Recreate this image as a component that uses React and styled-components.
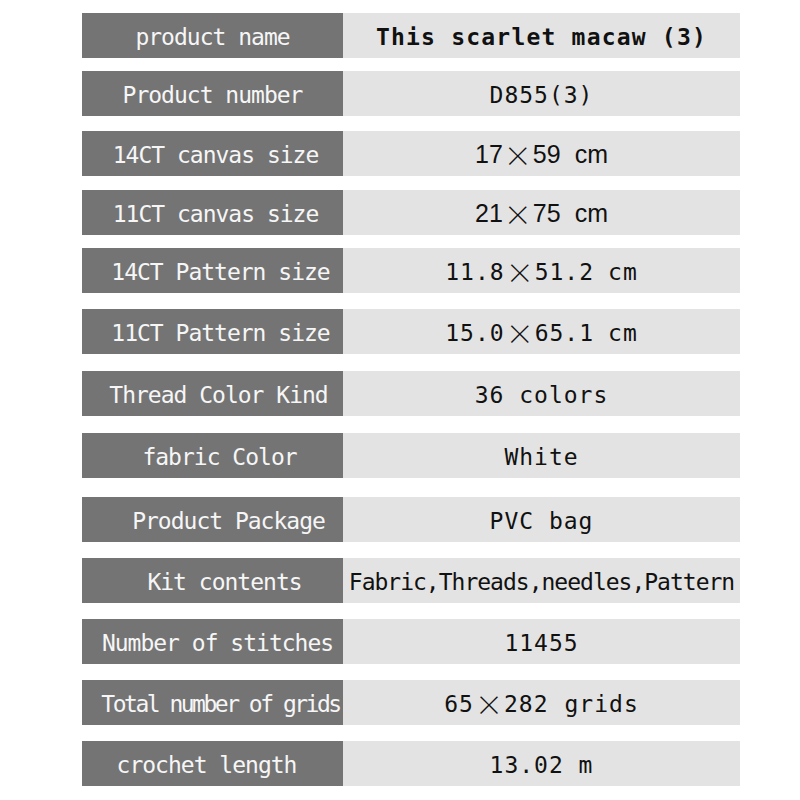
import React from "react";
import styled, { createGlobalStyle } from "styled-components";

const Global = createGlobalStyle`
  html, body { margin: 0; padding: 0; background: #ffffff; }
  body { width: 800px; height: 800px; overflow: hidden; }
`;

const Sheet = styled.div`
  display: flex;
  flex-direction: column;
  padding: 0 0 0 82px;
  width: 800px;
  box-sizing: border-box;
`;

const Row = styled.div`
  display: grid;
  grid-template-columns: 261px 397px;
  height: 45px;
  margin-top: ${(p) => p.$gap}px;
`;

const Label = styled.div`
  background: #747474;
  color: #f6f6f6;
  display: flex;
  align-items: center;
  justify-content: center;
  padding-left: ${(p) => (p.$shift > 0 ? p.$shift * 2 : 0)}px;
  padding-right: ${(p) => (p.$shift < 0 ? -p.$shift * 2 : 0)}px;
  font-family: "DejaVu Sans Mono", "Liberation Mono", monospace;
  font-size: 23px;
  letter-spacing: ${(p) => p.$ls ?? -1}px;
  white-space: nowrap;
  padding-top: 2px;
  box-sizing: border-box;
`;

const Value = styled.div`
  background: #e3e3e3;
  color: #111111;
  display: flex;
  align-items: center;
  justify-content: center;
  padding-top: 2px;
  box-sizing: border-box;
  font-family: ${(p) =>
    p.$kind === "sans"
      ? `"Liberation Sans", Arial, sans-serif`
      : `"DejaVu Sans Mono", "Liberation Mono", monospace`};
  font-size: ${(p) => (p.$kind === "sans" ? "25px" : "23px")};
  font-weight: ${(p) => (p.$bold ? 700 : 400)};
  letter-spacing: ${(p) =>
    p.$kind === "tight" ? "-1px" : p.$kind === "sans" ? "0px" : p.$bold ? "1.2px" : "1px"};
  white-space: nowrap;
`;

const Mul = styled.span`
  font-family: "Noto Sans CJK SC", "DejaVu Sans", sans-serif;
  font-weight: 300;
  font-size: 28px;
  letter-spacing: 0;
  margin: 0 1px;
`;

const Space = styled.span`
  display: inline-block;
  width: ${(p) => p.$w}px;
`;

const rows = [
  { gap: 13, label: "product name", shift: 0, value: "This scarlet macaw (3)", bold: true },
  { gap: 13, label: "Product number", shift: 0, value: "D855(3)" },
  { gap: 15, label: "14CT canvas size", shift: 3, value: ["17", "59", "cm"], kind: "sans", wide: 14 },
  { gap: 14, label: "11CT canvas size", shift: 3, value: ["21", "75", "cm"], kind: "sans", wide: 14 },
  { gap: 13, label: "14CT Pattern size", shift: 8, value: ["11.8", "51.2", "cm"], wide: 14 },
  { gap: 16, label: "11CT Pattern size", shift: 8, value: ["15.0", "65.1", "cm"], wide: 14 },
  { gap: 17, label: "Thread Color Kind", shift: 6, value: "36 colors" },
  { gap: 17, label: "fabric Color", shift: 7, value: "White" },
  { gap: 19, label: "Product Package", shift: 16, value: "PVC bag" },
  { gap: 16, label: "Kit contents", shift: 12, value: "Fabric,Threads,needles,Pattern", kind: "tight" },
  { gap: 16, label: "Number of stitches", shift: 5, value: "11455" },
  { gap: 16, label: "Total number of grids", shift: 8, ls: -2.5, value: ["65", "282", "grids"], wide: 16 },
  { gap: 16, label: "crochet length", shift: -6, value: "13.02 m" },
];

function renderValue(r) {
  if (Array.isArray(r.value)) {
    const [a, b, c] = r.value;
    return (
      <>
        {a}
        <Mul>×</Mul>
        {b}
        <Space $w={r.wide || 8} />
        {c}
      </>
    );
  }
  return r.value;
}

export default function App() {
  return (
    <>
      <Global />
      <Sheet>
        {rows.map((r) => (
          <Row key={r.label} $gap={r.gap}>
            <Label $shift={r.shift} $ls={r.ls}>{r.label}</Label>
            <Value $bold={r.bold} $kind={r.kind}>
              {renderValue(r)}
            </Value>
          </Row>
        ))}
      </Sheet>
    </>
  );
}
